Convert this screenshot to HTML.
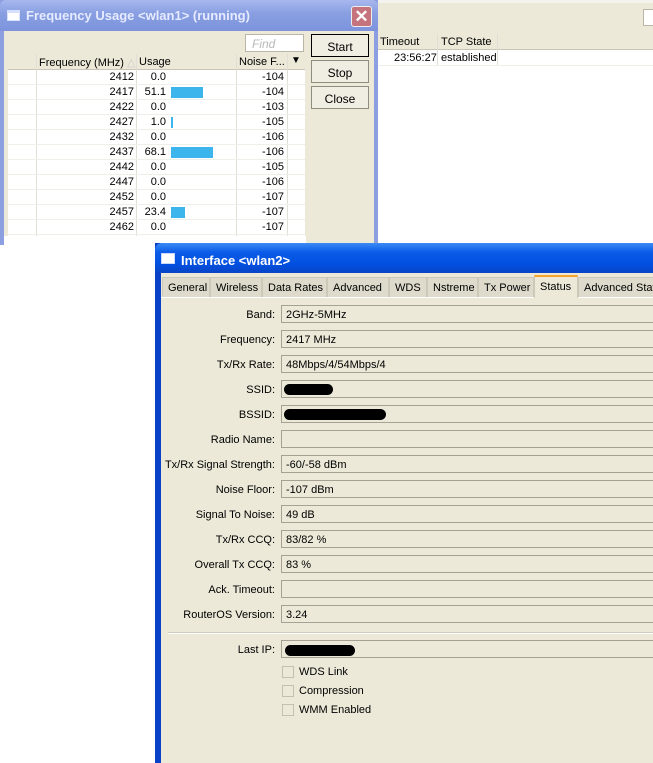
<!DOCTYPE html>
<html><head><style>
*{margin:0;padding:0;box-sizing:border-box}
body{width:653px;height:763px;overflow:hidden;position:relative;background:#fff;font-family:"Liberation Sans",sans-serif;font-size:11px;color:#000}
.a{position:absolute}
.row{position:absolute;left:8px;width:297px;height:15px;border-bottom:1px solid #efefe9}
.row span{position:absolute;top:1px}
.f{right:171px}.u{right:139px}.n{right:21px}
.bar{position:absolute;left:163px;top:2px;height:11px;background:#3CB5EC}
.lbl{position:absolute;right:378px;width:200px;text-align:right}
.fld{position:absolute;left:281px;width:380px;height:18px;border:1px solid #a5a294;border-right:none;background:#ECE9D8;padding:3px 0 0 4px}
.blk{position:absolute;top:3px;height:11px;background:#000;border-radius:6px}
.tab{position:absolute;top:277px;height:20px;padding:4px 0 0 5px;border:1px solid #ccc9b8;border-bottom:none;background:#dedbcc}
.cb{position:absolute;left:282px;width:12px;height:12px;border:1px solid #c3c0b0;background:#ECE9D8}
.cbl{position:absolute;left:299px}
.btn{position:absolute;left:311px;width:58px;height:23px;border:1px solid #8f8d80;background:#f0eee2;text-align:center;padding-top:5px;font-size:12px}
</style></head><body>
<!-- background window -->
<div class="a" style="left:378px;top:0;width:275px;height:34px;background:#ECE9D8;border-top:3px solid #f4f3ee"></div>
<div class="a" style="left:643px;top:9px;width:12px;height:17px;border:1px solid #b9b6a8;background:#fff"></div>
<div class="a" style="left:378px;top:34px;width:275px;height:16px;background:#ECE9D8;border-bottom:1px solid #c9c6b8"></div>
<div class="a" style="left:380px;top:36px">Timeout</div>
<div class="a" style="left:437px;top:34px;width:1px;height:32px;background:#e0ded5"></div>
<div class="a" style="left:497px;top:34px;width:1px;height:32px;background:#e0ded5"></div>
<div class="a" style="left:441px;top:36px">TCP State</div>
<div class="a" style="left:394px;top:52px">23:56:27</div>
<div class="a" style="left:441px;top:52px">established</div>
<div class="a" style="left:378px;top:65px;width:275px;height:1px;background:#efefe9"></div>

<!-- frequency window -->
<div class="a" style="left:0;top:0;width:378px;height:245px;background:#8C9FE0"></div>
<div class="a" style="left:4px;top:31px;width:370px;height:214px;background:#ECE9D8"></div>
<div class="a" style="left:4px;top:236px;width:302px;height:9px;background:#fff"></div>
<div class="a" style="left:0;top:0;width:378px;height:31px;background:linear-gradient(#a8b8ef,#8aa0e2 40%,#7d93dc);border-radius:6px 6px 0 0"></div>
<div class="a" style="left:7px;top:10px;width:13px;height:11px;background:#fff;border:1px solid #d8e0ff;border-top-width:3px"></div>
<div class="a" style="left:26px;top:8px;color:#e6ebff;font-weight:bold;font-size:13px">Frequency Usage &lt;wlan1&gt; (running)</div>
<div class="a" style="left:351px;top:6px;width:21px;height:21px;background:#c5737c;border:1px solid #eee;border-radius:3px;color:#fff;font-weight:bold;font-size:17px;text-align:center;line-height:19px">✕</div>
<div class="a" style="left:245px;top:34px;width:59px;height:18px;border:1px solid #b9b6a8;background:#fff;color:#b8b8b8;font-style:italic;padding:2px 0 0 6px;font-size:12px">Find</div>
<div class="btn" style="top:34px;border:1px solid #000">Start</div>
<div class="btn" style="top:60px">Stop</div>
<div class="btn" style="top:86px">Close</div>
<div class="a" style="left:8px;top:70px;width:297px;height:166px;background:#fff"></div>
<div class="a" style="left:8px;top:54px;width:297px;height:16px;background:#ECE9D8;border-bottom:1px solid #c9c6b8"></div>
<div class="a" style="left:39px;top:56px">Frequency (MHz) <span style="color:#ccc">△</span></div>
<div class="a" style="left:139px;top:56px">Usage</div>
<div class="a" style="left:239px;top:56px">Noise F...</div>
<div class="a" style="left:291px;top:55px;font-size:10px">▼</div>
<div class="a" style="left:36px;top:54px;width:1px;height:182px;background:#e0ded5"></div>
<div class="a" style="left:136px;top:54px;width:1px;height:182px;background:#e0ded5"></div>
<div class="a" style="left:236px;top:54px;width:1px;height:182px;background:#e0ded5"></div>
<div class="a" style="left:287px;top:54px;width:1px;height:182px;background:#e0ded5"></div>
<div class="row" style="top:70px"><span class="f">2412</span><span class="u">0.0</span><span class="n">-104</span></div>
<div class="row" style="top:85px"><span class="f">2417</span><span class="u">51.1</span><i class="bar" style="width:32px"></i><span class="n">-104</span></div>
<div class="row" style="top:100px"><span class="f">2422</span><span class="u">0.0</span><span class="n">-103</span></div>
<div class="row" style="top:115px"><span class="f">2427</span><span class="u">1.0</span><i class="bar" style="width:2px"></i><span class="n">-105</span></div>
<div class="row" style="top:130px"><span class="f">2432</span><span class="u">0.0</span><span class="n">-106</span></div>
<div class="row" style="top:145px"><span class="f">2437</span><span class="u">68.1</span><i class="bar" style="width:42px"></i><span class="n">-106</span></div>
<div class="row" style="top:160px"><span class="f">2442</span><span class="u">0.0</span><span class="n">-105</span></div>
<div class="row" style="top:175px"><span class="f">2447</span><span class="u">0.0</span><span class="n">-106</span></div>
<div class="row" style="top:190px"><span class="f">2452</span><span class="u">0.0</span><span class="n">-107</span></div>
<div class="row" style="top:205px"><span class="f">2457</span><span class="u">23.4</span><i class="bar" style="width:14px"></i><span class="n">-107</span></div>
<div class="row" style="top:220px"><span class="f">2462</span><span class="u">0.0</span><span class="n">-107</span></div>

<!-- interface window -->
<div class="a" style="left:155px;top:243px;width:498px;height:520px;background:#0842c8"></div>
<div class="a" style="left:161px;top:273px;width:492px;height:490px;background:#ECE9D8"></div>
<div class="a" style="left:155px;top:243px;width:498px;height:30px;background:linear-gradient(#3d8bf5,#0b5ce8 30%,#0250e0 70%,#0845c6);border-radius:7px 0 0 0"></div>
<div class="a" style="left:161px;top:253px;width:14px;height:11px;background:#fff;border:1px solid #c8d8ff"></div>
<div class="a" style="left:181px;top:253px;color:#fff;font-weight:bold;font-size:13px">Interface &lt;wlan2&gt;</div>
<div class="a" style="left:161px;top:297px;width:492px;height:1px;background:#fff"></div>
<div class="tab" style="left:162px;width:48px">General</div>
<div class="tab" style="left:210px;width:52px">Wireless</div>
<div class="tab" style="left:262px;width:65px">Data Rates</div>
<div class="tab" style="left:327px;width:62px">Advanced</div>
<div class="tab" style="left:389px;width:38px">WDS</div>
<div class="tab" style="left:427px;width:51px">Nstreme</div>
<div class="tab" style="left:478px;width:56px">Tx Power</div>
<div class="tab" style="left:534px;width:44px;top:275px;height:23px;background:#ECE9D8;border-top:2px solid #f6a32a">Status</div>
<div class="tab" style="left:578px;width:80px;white-space:nowrap;overflow:hidden">Advanced Stat</div>

<div class="lbl" style="top:309px">Band:</div><div class="fld" style="top:305px">2GHz-5MHz</div>
<div class="lbl" style="top:334px">Frequency:</div><div class="fld" style="top:330px">2417 MHz</div>
<div class="lbl" style="top:359px">Tx/Rx Rate:</div><div class="fld" style="top:355px">48Mbps/4/54Mbps/4</div>
<div class="lbl" style="top:384px">SSID:</div><div class="fld" style="top:380px"><i class="blk" style="left:2px;width:49px"></i></div>
<div class="lbl" style="top:409px">BSSID:</div><div class="fld" style="top:405px"><i class="blk" style="left:2px;width:102px"></i></div>
<div class="lbl" style="top:434px">Radio Name:</div><div class="fld" style="top:430px"></div>
<div class="lbl" style="top:459px">Tx/Rx Signal Strength:</div><div class="fld" style="top:455px">-60/-58 dBm</div>
<div class="lbl" style="top:484px">Noise Floor:</div><div class="fld" style="top:480px">-107 dBm</div>
<div class="lbl" style="top:509px">Signal To Noise:</div><div class="fld" style="top:505px">49 dB</div>
<div class="lbl" style="top:534px">Tx/Rx CCQ:</div><div class="fld" style="top:530px">83/82 %</div>
<div class="lbl" style="top:559px">Overall Tx CCQ:</div><div class="fld" style="top:555px">83 %</div>
<div class="lbl" style="top:584px">Ack. Timeout:</div><div class="fld" style="top:580px"></div>
<div class="lbl" style="top:609px">RouterOS Version:</div><div class="fld" style="top:605px">3.24</div>
<div class="a" style="left:168px;top:632px;width:485px;height:1px;background:#d0cdbf"></div>
<div class="a" style="left:168px;top:633px;width:485px;height:1px;background:#fff"></div>
<div class="lbl" style="top:644px">Last IP:</div><div class="fld" style="top:640px"><i class="blk" style="left:3px;width:70px;top:4px"></i></div>
<div class="cb" style="top:666px"></div><div class="cbl" style="top:666px">WDS Link</div>
<div class="cb" style="top:685px"></div><div class="cbl" style="top:685px">Compression</div>
<div class="cb" style="top:704px"></div><div class="cbl" style="top:704px">WMM Enabled</div>
</body></html>
